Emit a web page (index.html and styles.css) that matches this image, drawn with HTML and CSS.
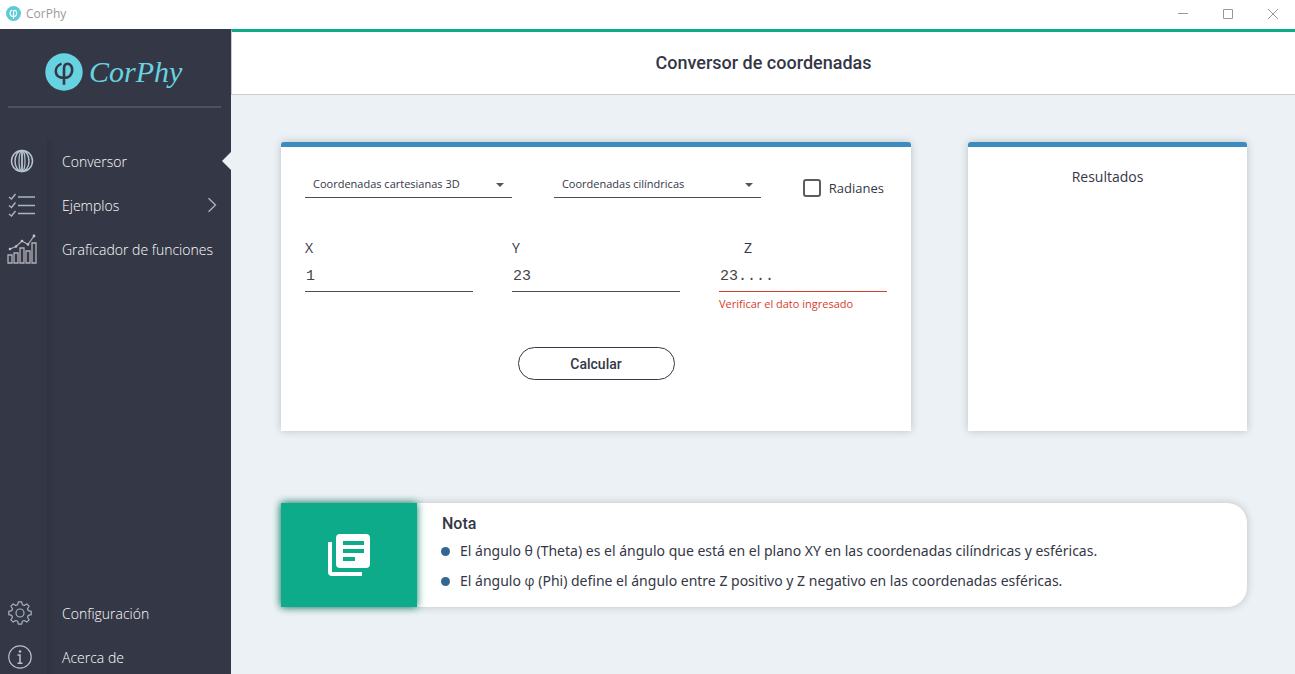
FILE: index.html
```html
<!DOCTYPE html>
<html lang="es">
<head>
<meta charset="utf-8">
<title>CorPhy</title>
<link rel="stylesheet" href="styles.css">
</head>
<body>
<div class="window">
  <header class="titlebar">
    <svg class="app-icon" viewBox="0 0 38 38" aria-hidden="true"><circle cx="19" cy="19" r="19" fill="#5ccbd8"/><path d="M16 10c-8 3-8 17 3 17 10 0 10-16 3-16-3 0-3 3-3 6v15" fill="none" stroke="#fff" stroke-width="3"/></svg>
    <span class="app-name">CorPhy</span>
    <div class="window-buttons">
      <button type="button" aria-label="Minimizar"><svg viewBox="0 0 12 12"><path d="M1 5.500h10"/></svg></button>
      <button type="button" aria-label="Maximizar"><svg viewBox="0 0 12 12"><path d="M1.500 1.500h9v9h-9z"/></svg></button>
      <button type="button" aria-label="Cerrar"><svg viewBox="0 0 12 12"><path d="M1 1l10 10M11 1L1 11"/></svg></button>
    </div>
  </header>
  <div class="layout">
    <aside class="sidebar">
      <div class="brand">
        <svg class="brand-icon" viewBox="0 0 38 38" aria-hidden="true"><circle cx="19" cy="19" r="18.700" fill="#68d3e0"/><path d="M16.500 10.600c-8 3-8 14.400 2.500 14.400 10.500 0 10-14.200 3.600-14.200-2.600 0-3.600 2-3.600 5v16" fill="none" stroke="#343746" stroke-width="2.600"/></svg>
        <span class="brand-name">CorPhy</span>
      </div>
      <nav class="nav">
        <ul class="nav-group">
          <li><a class="nav-item active" href="#conversor">
            <span class="nav-icon globe"><svg width="24" height="24" viewBox="0 0 24 24"><g fill="none" stroke="#b6c4ce" stroke-width="1.500"><circle cx="12" cy="12" r="10.500"/><ellipse cx="12" cy="12" rx="7" ry="10.500"/><ellipse cx="12" cy="12" rx="3" ry="10.500" stroke-width="1.200"/><path d="M12 1.500v21" stroke-width="1.800"/></g></svg></span>
            <span>Conversor</span></a></li>
          <li><a class="nav-item" href="#ejemplos">
            <span class="nav-icon"><svg width="28" height="24" viewBox="0 0 28 24"><g fill="none" stroke="#a9b5c0" stroke-width="1.400"><path d="M1 4l2.500 2L7.500 1M1 12.500l2.500 2 4-5M1 21l2.500 2 4-5"/><path d="M10 4h17M10 12.500h17M10 20.500h17"/></g></svg></span>
            <span>Ejemplos</span>
            <svg class="chevron" width="10" height="16" viewBox="0 0 10 16"><path d="M1.500 1.200L8.500 8l-7 6.800" fill="none" stroke="#a9b2bd" stroke-width="1.400"/></svg></a></li>
          <li><a class="nav-item" href="#graficador">
            <span class="nav-icon chart"><svg width="30" height="30" viewBox="0 0 30 30"><g fill="none" stroke="#b0b0b6" stroke-width="1.300"><path d="M1 21h4v8H1zM7 19h4v10H7zM13 14h4v15h-4zM19 17h4v12h-4zM25 9h4v20h-4z"/><path d="M3 15l6-2.500L15 7l6 3.500L27 2"/></g><g fill="#c3c8ce"><circle cx="3" cy="15" r="1.300"/><circle cx="9" cy="12.500" r="1.200"/><circle cx="15" cy="7" r="1.300"/><circle cx="21" cy="10.500" r="1.200"/><circle cx="27" cy="2" r="1.400"/></g></svg></span>
            <span>Graficador de funciones</span></a></li>
        </ul>
        <ul class="nav-group">
          <li><a class="nav-item" href="#configuracion">
            <span class="nav-icon"><svg width="24" height="24" viewBox="0 0 24 24"><g fill="none" stroke="#a9b2bd" stroke-width="1.200" stroke-linejoin="round"><circle cx="12" cy="12" r="4"/><path d="M10.300 .8h3.400l.6 2.900 2 .8 2.500-1.600 2.300 2.300-1.600 2.500.8 2 2.900.6v3.400l-2.900.6-.8 2 1.600 2.500-2.300 2.300-2.500-1.600-2 .8-.6 2.900h-3.400l-.6-2.900-2-.8-2.500 1.600-2.300-2.300 1.600-2.500-.8-2-2.900-.6v-3.400l2.900-.6.8-2-1.600-2.500 2.300-2.300 2.500 1.600 2-.8z"/></g></svg></span>
            <span>Configuración</span></a></li>
          <li><a class="nav-item" href="#acerca">
            <span class="nav-icon"><svg width="24" height="24" viewBox="0 0 24 24"><g fill="none" stroke="#b9c1ca" stroke-width="1.200"><circle cx="12" cy="12" r="11.200"/><path d="M9.500 10H12v8M9.500 18.300h5" stroke-width="1.500"/></g><circle cx="12" cy="6.500" r="1.300" fill="#b9c1ca"/></svg></span>
            <span>Acerca de</span></a></li>
        </ul>
      </nav>
    </aside>
    <main class="main">
      <div class="page-header"><h1>Conversor de coordenadas</h1></div>
      <div class="content">
        <div class="cards">
          <form class="card converter">
            <div class="options">
              <div class="select-box">
                <select aria-label="Coordenadas de origen"><option>Coordenadas cartesianas 3D</option></select>
                <svg class="caret" viewBox="0 0 8 4"><path d="M0 0h8L4 4z"/></svg>
              </div>
              <div class="select-box">
                <select aria-label="Coordenadas de destino"><option>Coordenadas cilíndricas</option></select>
                <svg class="caret" viewBox="0 0 8 4"><path d="M0 0h8L4 4z"/></svg>
              </div>
              <label class="check"><input type="checkbox"><span>Radianes</span></label>
            </div>
            <div class="fields">
              <div class="field"><label for="x">X</label><input id="x" type="text" value="1"></div>
              <div class="field"><label for="y">Y</label><input id="y" type="text" value="23"></div>
              <div class="field invalid"><label for="z">Z</label><input id="z" type="text" value="23...." aria-describedby="z-error"><p id="z-error" class="error">Verificar el dato ingresado</p></div>
            </div>
            <button class="submit" type="button">Calcular</button>
          </form>
          <section class="card results"><h2>Resultados</h2></section>
        </div>
        <section class="note">
          <div class="note-icon"><svg viewBox="0 0 42 42" aria-hidden="true"><path fill="#fff" fill-rule="evenodd" d="M12 0h26q4 0 4 4v26q0 4-4 4H12q-4 0-4-4V4q0-4 4-4zm3 7v4h21V7zm0 8v4h21v-4zm0 8v4h12v-4z"/><path fill="#fff" d="M0 8h4v30h30v4H4q-4 0-4-4z"/></svg></div>
          <div class="note-body">
            <h2>Nota</h2>
            <ul>
              <li><span>El ángulo θ (Theta) es el ángulo que está en el plano XY en las coordenadas cilíndricas y esféricas.</span></li>
              <li><span>El ángulo <span class="symbol">φ</span> (Phi) define el ángulo entre Z positivo y Z negativo en las coordenadas esféricas.</span></li>
            </ul>
          </div>
        </section>
      </div>
    </main>
  </div>
</div>
</body>
</html>
```
FILE: styles.css
```css
* { box-sizing: border-box; }
body {
  margin: 0;
  font-family: "Open Sans", "Noto Sans", sans-serif;
  font-size: 14px;
  color: #343746;
  background: #ecf1f5;
}
h1, h2, p, ul { margin: 0; padding: 0; }
ul { list-style: none; }
svg { display: block; }
.window { display: flex; flex-direction: column; min-height: 100vh; }

.titlebar { display: flex; align-items: center; height: 29px; padding: 0 0 2px 6px; background: #fff; }
.app-icon { width: 15px; height: 15px; margin-right: 5px; }
.app-name { font-size: 12px; color: #999; }
.window-buttons { display: flex; margin-left: auto; }
.window-buttons button {
  display: grid;
  place-items: center;
  width: 45px;
  height: 26px;
  padding: 0;
  border: 0;
  background: none;
}
.window-buttons svg { width: 12px; height: 12px; fill: none; stroke: #999; }

.layout { display: flex; flex: 1; }
.sidebar { display: flex; flex-direction: column; flex: 0 0 231px; background: #343746; }
.brand {
  display: flex;
  align-items: center;
  gap: 6px;
  height: 79px;
  margin: 0 10px 31px 8px;
  padding: 8px 0 0 37px;
  border-bottom: 2px solid #4d505e;
}
.brand-icon { width: 38px; height: 38px; }
.brand-name { font: italic 30px/40px "Liberation Serif", serif; color: #68d3e0; }
.nav {
  display: flex;
  flex: 1;
  flex-direction: column;
  justify-content: space-between;
  padding-top: 5px;
  background: linear-gradient(90deg, #343746 47px, #2f3240 47px, #343746 54px);
}
.nav-group { display: grid; gap: 10px; }
.nav-item {
  position: relative;
  display: flex;
  align-items: center;
  height: 34px;
  font-weight: 300;
  color: #fff;
  text-decoration: none;
}
.nav-icon { flex: 0 0 62px; padding-left: 8px; }
.globe { padding-left: 10px; }
.chart { padding-left: 7px; }
.chevron { margin: 0 14px 0 auto; }
.active::after {
  content: "";
  position: absolute;
  right: 0;
  border: 9px solid transparent;
  border-left: 0;
  border-right-color: #ecf1f5;
}

.main { flex: 1; min-width: 0; }
.page-header {
  display: grid;
  place-items: center;
  height: 66px;
  border-top: 3px solid #0dab8a;
  border-bottom: 1px solid #ccc;
  border-left: 1px solid #ccc;
  background: #fff;
}
.page-header h1 { font: 500 18px/24px Roboto, sans-serif; }
.content { padding: 47px 48px 40px 50px; }
.cards { display: grid; grid-template-columns: 630fr 279fr; gap: 57px; }
.card {
  min-height: 289px;
  border-top: 5px solid #3c8dbc;
  border-radius: 3px 3px 0 0;
  background: #fff;
  box-shadow: 0 0 8px #0003;
}
.converter { padding: 24px; }
.options { display: flex; align-items: flex-start; gap: 42px; }
.select-box { display: grid; flex: 1; align-items: center; }
.select-box select {
  grid-area: 1 / 1;
  appearance: none;
  width: 100%;
  height: 27px;
  padding: 0 20px 0 8px;
  border: 0;
  border-bottom: 1px solid #4d4d52;
  border-radius: 0;
  background: none;
  font: 11px/20px "Open Sans", sans-serif;
  color: inherit;
}
.caret { grid-area: 1 / 1; justify-self: end; width: 8px; height: 4px; margin-right: 8px; fill: #555; pointer-events: none; }
.check { display: flex; align-items: center; gap: 8px; padding: 7px 3px 0 0; line-height: 20px; font-size: 13px; }
.check input { appearance: none; width: 18px; height: 18px; margin: 0; border: 2px solid #5c5c5f; border-radius: 3px; }
.fields { display: grid; grid-template-columns: repeat(3, 1fr); gap: 39px; height: 82px; margin-top: 40px; }
.field label { display: block; line-height: 20px; font-size: 14px; }
.field input {
  display: block;
  width: 100%;
  height: 34px;
  padding: 3px 1px 0;
  border: 0;
  border-bottom: 1px solid #4d4d52;
  background: none;
  font: 15px/20px "Liberation Mono", monospace;
  color: #444;
}
.invalid label { padding-left: 25px; }
.field.invalid input { border-bottom: 1px solid #d4402f; }
.error { padding-top: 2px; font-size: 11px; line-height: 20px; color: #d4402f; }
.submit {
  display: block;
  width: 157px;
  height: 33px;
  margin: 27px auto 0;
  border: 1px solid #343746;
  border-radius: 17px;
  background: #fff;
  font: 500 14px/20px Roboto, sans-serif;
  color: inherit;
}
.results { padding-top: 20px; text-align: center; }
.results h2 { font-size: 14px; line-height: 20px; font-weight: 400; }

.note {
  display: flex;
  margin-top: 72px;
  min-height: 104px;
  border-radius: 0 20px 20px 0;
  background: #fff;
  box-shadow: 0 0 8px #0003;
}
.note-icon { display: grid; flex: 0 0 136px; place-items: center; background: #0dab8a; box-shadow: 0 0 8px #0b8068; }
.note-icon svg { width: 42px; height: 42px; }
.note-body { padding: 11px 20px 9px 24px; }
.note-body h2 { padding-left: 1px; font: 500 16px/20px Roboto, sans-serif; }
.note-body ul { display: grid; gap: 10px; padding-top: 7px; font-family: "Noto Sans", sans-serif; }
.note-body li { display: flex; align-items: center; gap: 10px; line-height: 20px; }
.note-body li::before { content: ""; flex: none; width: 9px; height: 9px; border-radius: 50%; background: #336791; }
.symbol { font-family: "Open Sans", sans-serif; }
```
